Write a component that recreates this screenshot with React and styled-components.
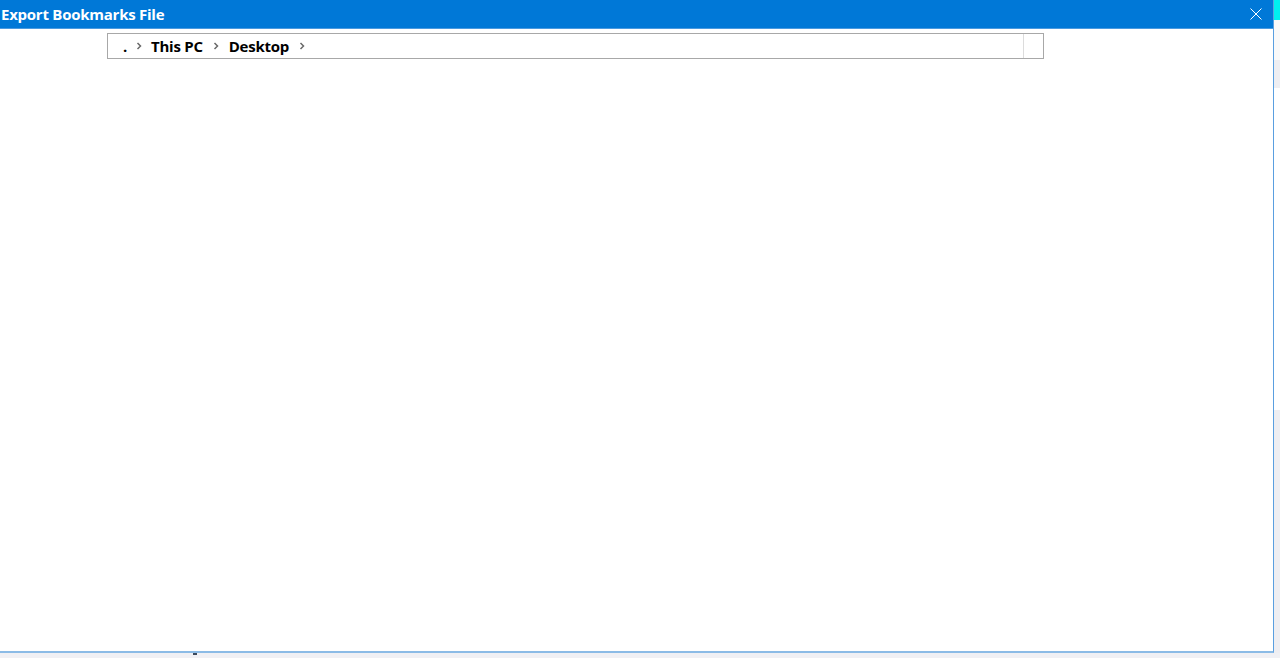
import React from 'react';
import styled, { createGlobalStyle } from 'styled-components';

const GlobalStyle = createGlobalStyle`
  html, body {
    margin: 0;
    padding: 0;
    background: #f0f0f4;
    overflow: hidden;
  }
  body {
    font-family: "Open Sans", "Noto Sans", sans-serif;
  }
`;

const Page = styled.div`
  display: flex;
  flex-direction: column;
  width: 1280px;
  height: 658px;
`;

const TopRow = styled.div`
  display: flex;
  height: 653px;
`;

const Dialog = styled.div`
  width: 1273px;
  display: flex;
  flex-direction: column;
  background: #ffffff;
  border-right: 1px solid #5a9fe0;
  border-bottom: 2px solid #8bbbe6;
`;

const TitleBar = styled.div`
  height: 28px;
  background: #0078d7;
  display: flex;
  align-items: center;
  justify-content: space-between;
  padding: 0 10px 0 1px;
  border-bottom: 1px solid #4a9ae0;
`;

const Title = styled.div`
  color: #ffffff;
  font-weight: 700;
  font-size: 15px;
  letter-spacing: -0.25px;
  margin-top: -1px;
`;

const CloseButton = styled.div`
  width: 14px;
  height: 14px;
  display: flex;
  align-items: center;
  justify-content: center;
  margin-top: -1px;
`;

const Body = styled.div`
  flex: 1;
  padding: 4px 0 0 107px;
`;

const AddressBar = styled.div`
  width: 935px;
  height: 24px;
  border: 1px solid #a8a8a8;
  display: flex;
  align-items: center;
`;

const Crumbs = styled.div`
  flex: 1;
  display: flex;
  align-items: center;
  padding-left: 15px;
  margin-top: -1px;
`;

const Crumb = styled.span`
  font-weight: 700;
  font-size: 15px;
  color: #000000;
  letter-spacing: -0.25px;
`;

const Chevron = styled.span`
  display: inline-flex;
  margin: 1px ${(p) => p.$gap || 8}px 0;
`;

const DropCell = styled.div`
  width: 19px;
  height: 100%;
  border-left: 1px solid #dcdcdc;
`;

const Side = styled.div`
  width: 6px;
  display: flex;
  flex-direction: column;
`;

const SideBlock = styled.div`
  height: ${(p) => p.$h}px;
  background: ${(p) => p.$c};
  flex: ${(p) => (p.$grow ? 1 : 'none')};
`;

const Bottom = styled.div`
  height: 5px;
  background: #f0f0f4;
  position: relative;
`;

const Marker = styled.div`
  position: absolute;
  left: 193px;
  top: 0;
  width: 4px;
  height: 2px;
  background: #3c4a5c;
`;

const ChevronIcon = () => (
  <svg width="6" height="8" viewBox="0 0 6 8">
    <path d="M1.5 1 L4.5 4 L1.5 7" fill="none" stroke="#6a6a6a" strokeWidth="1.5" />
  </svg>
);

export default function App() {
  return (
    <Page>
      <GlobalStyle />
      <TopRow>
        <Dialog>
          <TitleBar>
            <Title>Export Bookmarks File</Title>
            <CloseButton>
              <svg width="12" height="12" viewBox="0 0 12 12">
                <path d="M0.5 0.5 L11.5 11.5 M11.5 0.5 L0.5 11.5" stroke="#ffffff" strokeWidth="1" />
              </svg>
            </CloseButton>
          </TitleBar>
          <Body>
            <AddressBar>
              <Crumbs>
                <Crumb>.</Crumb>
                <Chevron $gap={9}><ChevronIcon /></Chevron>
                <Crumb>This PC</Crumb>
                <Chevron $gap={10}><ChevronIcon /></Chevron>
                <Crumb>Desktop</Crumb>
                <Chevron $gap={10}><ChevronIcon /></Chevron>
              </Crumbs>
              <DropCell />
            </AddressBar>
          </Body>
        </Dialog>
        <Side>
          <SideBlock $h={20} $c="#00f0f0" />
          <SideBlock $h={40} $c="#f9f9f9" />
          <SideBlock $h={28} $c="#eeeef2" />
          <SideBlock $h={322} $c="#ffffff" />
          <SideBlock $grow $c="#eeeef2" />
        </Side>
      </TopRow>
      <Bottom>
        <Marker />
      </Bottom>
    </Page>
  );
}
